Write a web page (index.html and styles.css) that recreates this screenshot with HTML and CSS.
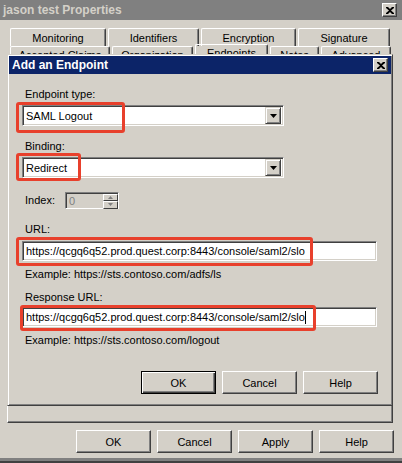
FILE: index.html
```html
<!DOCTYPE html>
<html lang="en">
<head>
    <meta charset="UTF-8">
    <title>jason test Properties</title>
    <link rel="stylesheet" href="styles.css">
</head>
<body>
<div class="window">
    <div class="titlebar inactive">
        <span class="caption">jason test Properties</span>
        <span class="xbtn">
            <svg width="8" height="7" viewBox="0 0 8 7"><path d="M0 0h2l2 2 2-2h2v1L5 3.5 8 6v1H6L4 5 2 7H0V6l3-2.5L0 1z" fill="#000"/></svg>
        </span>
    </div>

    <div class="sheet">
        <div class="tabrow">
            <div class="tab" style="width:96px">Monitoring</div>
            <div class="tab" style="width:91px">Identifiers</div>
            <div class="tab" style="width:95px">Encryption</div>
            <div class="tab" style="width:92px">Signature</div>
        </div>
        <div class="tabrow back">
            <div class="tab" style="width:100px">Accepted Claims</div>
            <div class="tab" style="width:81px">Organization</div>
            <div class="tab selected" style="width:73px">Endpoints</div>
            <div class="tab" style="width:49px">Notes</div>
            <div class="tab" style="width:70px">Advanced</div>
        </div>
        <div class="panel"></div>
        <div class="actions">
            <button class="btn">OK</button>
            <button class="btn">Cancel</button>
            <button class="btn">Apply</button>
            <button class="btn">Help</button>
        </div>
    </div>

    <div class="dialog">
        <div class="titlebar active">
            <span class="caption">Add an Endpoint</span>
            <span class="xbtn">
                <svg width="8" height="7" viewBox="0 0 8 7"><path d="M0 0h2l2 2 2-2h2v1L5 3.5 8 6v1H6L4 5 2 7H0V6l3-2.5L0 1z" fill="#000"/></svg>
            </span>
        </div>
        <div class="dialog-body">
            <div class="label">Endpoint type:</div>
            <div class="combo">
                <span class="value">SAML Logout</span>
                <span class="drop"><svg width="7" height="4" viewBox="0 0 7 4"><path d="M0 0h7L3.5 4z" fill="#000"/></svg></span>
            </div>

            <div class="label">Binding:</div>
            <div class="combo">
                <span class="value">Redirect</span>
                <span class="drop"><svg width="7" height="4" viewBox="0 0 7 4"><path d="M0 0h7L3.5 4z" fill="#000"/></svg></span>
            </div>

            <div class="index-row">
                <span class="label inline">Index:</span>
                <div class="spin">
                    <span class="value">0</span>
                    <span class="spin-btns">
                        <span class="spin-btn"><svg width="5" height="3" viewBox="0 0 5 3"><path d="M0 3h5L2.5 0z" fill="#808080"/></svg></span>
                        <span class="spin-btn"><svg width="5" height="3" viewBox="0 0 5 3"><path d="M0 0h5L2.5 3z" fill="#808080"/></svg></span>
                    </span>
                </div>
            </div>

            <div class="label url-label">URL:</div>
            <div class="textbox">https://qcgq6q52.prod.quest.corp:8443/console/saml2/slo</div>
            <div class="hint">Example: https://sts.contoso.com/adfs/ls</div>

            <div class="label resp-label">Response URL:</div>
            <div class="textbox tight">https://qcgq6q52.prod.quest.corp:8443/console/saml2/slo<span class="caret"></span></div>
            <div class="hint">Example: https://sts.contoso.com/logout</div>

            <div class="dialog-actions">
                <button class="btn default">OK</button>
                <button class="btn">Cancel</button>
                <button class="btn">Help</button>
            </div>
        </div>
    </div>

    <!-- red annotation boxes -->
    <div class="mark" style="left:16px;top:102px;width:109px;height:31px"></div>
    <div class="mark" style="left:16px;top:153px;width:65px;height:28px"></div>
    <div class="mark" style="left:16px;top:237px;width:297px;height:29px"></div>
    <div class="mark" style="left:20px;top:305px;width:296px;height:26px"></div>
</div>
</body>
</html>
```

FILE: styles.css
```css
* {
    box-sizing: border-box;
}

body {
    margin: 0;
    background-color: #d4d0c8;
    font-family: 'Liberation Sans', Arial, sans-serif;
    font-size: 11px;
    color: #000;
}

.window {
    position: relative;
    width: 402px;
    height: 463px;
    overflow: hidden;
    background-color: #d4d0c8;
    border-bottom: 2px solid #404040;
    box-shadow: inset 0 -3px #808080;
}

/* title bars */
.titlebar {
    display: flex;
    align-items: center;
    justify-content: space-between;
    height: 20px;
    padding: 0 5px 0 3px;
}

.titlebar .caption {
    font-weight: bold;
    font-size: 12px;
}

.titlebar.inactive {
    background-color: #808080;
    color: #d4d0c8;
}

.titlebar.active {
    height: 18px;
    background-color: #0c2468;
    color: #fff;
    padding: 0 3px 0 3px;
}

.xbtn {
    display: flex;
    align-items: center;
    justify-content: center;
    width: 15px;
    height: 14px;
    background-color: #d4d0c8;
    border: 1px solid;
    border-color: #fff #404040 #404040 #fff;
    box-shadow: inset -1px -1px #808080;
}

/* property sheet */
.sheet {
    padding: 8px 9px 0 7px;
}

.tabrow {
    display: flex;
    gap: 2px;
    height: 18px;
    padding-left: 3px;
}

.tab {
    height: 18px;
    padding-top: 3px;
    text-align: center;
    white-space: nowrap;
    overflow: hidden;
    border-top: 1px solid #fff;
    border-left: 1px solid #fff;
    border-right: 1px solid #404040;
    border-radius: 2px 2px 0 0;
    box-shadow: inset -1px 0 #808080;
}

/* second row is mostly hidden by the dialog */
.tabrow.back {
    height: 10px;
}

.tabrow.back .tab {
    height: 10px;
    padding-top: 2px;
}

.tabrow.back .tab.selected {
    margin-top: -2px;
    height: 12px;
}

.panel {
    height: 367px;
    border: 1px solid;
    border-color: #fff #404040 #404040 #fff;
    box-shadow: inset -1px -1px #808080;
}

.actions {
    display: flex;
    justify-content: flex-end;
    gap: 6px;
    margin-top: 7px;
    margin-right: -1px;
}

.btn {
    width: 75px;
    height: 23px;
    padding: 0;
    font-family: 'Liberation Sans', Arial, sans-serif;
    font-size: 11px;
    color: #000;
    background-color: #d4d0c8;
    border: 1px solid;
    border-color: #fff #404040 #404040 #fff;
    box-shadow: inset -1px -1px #808080;
}

.btn.default {
    border: 1px solid #000;
    box-shadow: inset 1px 1px #fff, inset -1px -1px #404040, inset -2px -2px #808080;
}

/* add endpoint dialog */
.dialog {
    position: absolute;
    left: 7px;
    top: 54px;
    width: 386px;
    height: 352px;
    padding: 1px;
    background-color: #d4d0c8;
    border: 1px solid;
    border-color: #d4d0c8 #404040 #404040 #d4d0c8;
    box-shadow: inset 1px 1px #fff, inset -1px -1px #808080;
}

.dialog-body {
    display: flex;
    flex-direction: column;
    align-items: flex-start;
    height: 330px;
    padding: 0 0 10px 13px;
}

.label {
    height: 13px;
    line-height: 13px;
    margin-left: 3px;
    margin-top: 14px;
}

.label.inline {
    margin: 0 10px 0 3px;
}

.combo {
    display: flex;
    align-items: center;
    justify-content: space-between;
    width: 262px;
    height: 21px;
    margin-top: 4px;
    background-color: #fff;
    border: 1px solid;
    border-color: #808080 #fff #fff #808080;
    box-shadow: inset 1px 1px #404040, inset -1px -1px #d4d0c8;
}

.combo .value {
    padding-left: 3px;
}

.drop {
    display: flex;
    align-items: center;
    justify-content: center;
    width: 16px;
    height: 17px;
    margin-right: 2px;
    background-color: #d4d0c8;
    border: 1px solid;
    border-color: #d4d0c8 #404040 #404040 #d4d0c8;
    box-shadow: inset 1px 1px #fff, inset -1px -1px #808080;
}

.index-row {
    display: flex;
    align-items: center;
    margin-top: 14px;
}

.spin {
    display: flex;
    align-items: center;
    justify-content: space-between;
    width: 54px;
    height: 17px;
    color: #808080;
    background-color: #d4d0c8;
    border: 1px solid;
    border-color: #808080 #fff #fff #808080;
    box-shadow: inset 1px 1px #404040;
}

.spin .value {
    padding-left: 3px;
}

.spin-btns {
    display: flex;
    flex-direction: column;
    width: 15px;
    height: 15px;
    margin-top: 1px;
}

.spin-btn {
    display: flex;
    align-items: center;
    justify-content: center;
    height: 7px;
    border: 1px solid;
    border-color: #fff #404040 #404040 #fff;
}

.spin-btn + .spin-btn {
    height: 8px;
}

.url-label {
    margin-top: 14px;
}

.resp-label {
    margin-top: 10px;
}

.textbox {
    display: flex;
    align-items: center;
    width: 355px;
    height: 20px;
    margin-top: 5px;
    padding-left: 3px;
    background-color: #fff;
    border: 1px solid;
    border-color: #808080 #fff #fff #808080;
    box-shadow: inset 1px 1px #404040, inset -1px -1px #d4d0c8;
    white-space: nowrap;
}

.textbox.tight {
    margin-top: 3px;
}

.caret {
    display: inline-block;
    width: 1px;
    height: 13px;
    background-color: #000;
}

.hint {
    margin: 7px 0 0 3px;
    height: 13px;
    line-height: 13px;
}

.dialog-actions {
    display: flex;
    gap: 6px;
    margin-top: auto;
    margin-left: 119px;
}

/* annotation boxes */
.mark {
    position: absolute;
    border: 3px solid #e8402c;
    border-radius: 3px;
}
```
